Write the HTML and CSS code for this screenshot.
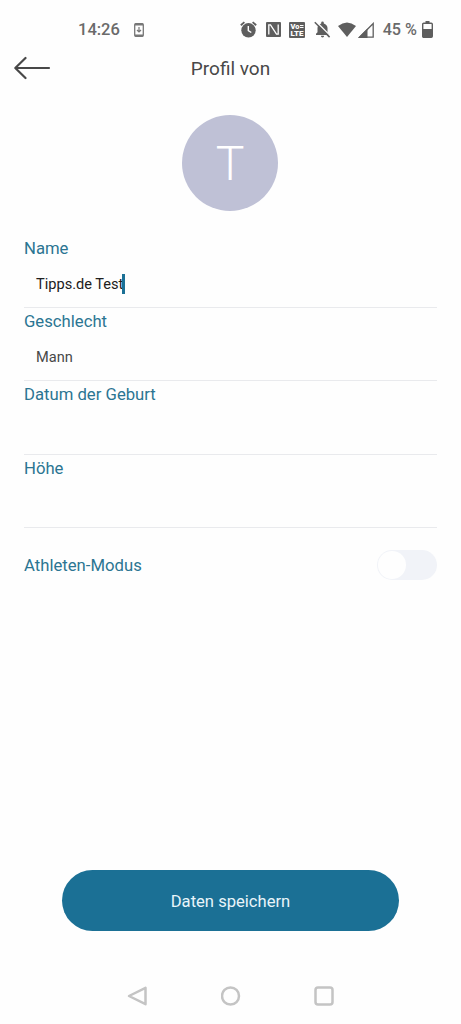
FILE: index.html
```html
<!DOCTYPE html>
<html lang="de">
<head>
<meta charset="utf-8">
<title>Profil von</title>
<link rel="stylesheet" href="styles.css">
</head>
<body>
<div class="screen">
  <div class="status">
    <div class="status-left">
      <span class="clock">14:26</span>
      <svg class="update" width="10" height="14" viewBox="0 0 10 14"><rect x=".7" y=".7" width="8.6" height="12.6" rx="1" fill="none" stroke="#777" stroke-width="1.3"/><path d="M1 1.500h8M1 12.500h8" stroke="#777" stroke-width="1.8"/><path d="M5 4v5M3 7l2 2 2-2" fill="none" stroke="#777" stroke-width="1.2"/></svg>
    </div>
    <div class="status-right">
      <svg width="17" height="17" viewBox="0 0 17 17"><circle cx="8.5" cy="9.3" r="7.2" fill="#5e5e5e"/><path d="M.8 4.2L4.4 1.1M16.2 4.2L12.6 1.1" stroke="#5e5e5e" stroke-width="1.8"/><path d="M8.3 5v4.7l3 1.8" fill="none" stroke="#fff" stroke-width="1.4"/></svg>
      <svg width="15" height="15" viewBox="0 0 15 15"><rect width="15" height="15" rx="1" fill="#5e5e5e"/><path d="M2.800 12.500V2.800h1.700l6 9.400h1.700V2.500" fill="none" stroke="#fff" stroke-width="1.300"/></svg>
      <svg width="16" height="16" viewBox="0 0 16 16"><rect width="16" height="16" rx="1" fill="#5e5e5e"/><text class="volte" x="1.5" y="7.2" textLength="9" lengthAdjust="spacingAndGlyphs">Vo</text><path d="M11 3.500h3.500M11 5.500h3.500" stroke="#fff"/><text class="volte" x="1.5" y="14.4" textLength="13" lengthAdjust="spacingAndGlyphs">LTE</text></svg>
      <svg width="17" height="17" viewBox="0 0 17 17"><path d="M2 14V12.800l1.500-1.500V7C3.500 4.600 5 3 7.200 2.400V1.800a1.300 1.300 0 0 1 2.600 0v.6C12 3 13.500 4.600 13.500 7v4.300l1.500 1.500V14zM6.900 14.800h3.200a1.600 1.600 0 0 1-3.200 0z" fill="#5e5e5e"/><path d="M2 .4l14.800 14.800" stroke="#fff" stroke-width="1.4"/><path d="M.8 1.300l14.800 14.800" stroke="#5e5e5e" stroke-width="1.500"/></svg>
      <svg class="wifi" width="18" height="15" viewBox="0 0 18 15"><path d="M0 4Q9-3.200 18 4L9 15z" fill="#5e5e5e"/></svg>
      <svg class="signal" width="16" height="16" viewBox="0 0 16 16"><path d="M1.500 15.200L15.200 1.500v13.700z" fill="none" stroke="#5e5e5e" stroke-width="1.300"/><path d="M0 16L9.500 6.500V16z" fill="#5e5e5e"/></svg>
      <span class="percent">45 %</span>
      <svg class="battery" width="11" height="17" viewBox="0 0 11 17"><path d="M3.500 0h4v2h-4z" fill="#5e5e5e"/><rect x=".7" y="2.200" width="9.600" height="14" rx="1" fill="none" stroke="#5e5e5e" stroke-width="1.400"/><path d="M1 8h9v8H1z" fill="#5e5e5e"/></svg>
    </div>
  </div>
  <header class="header">
    <svg class="back" width="37" height="24" viewBox="0 0 37 24"><path d="M11.500 2L1.300 12l10.200 10M1.300 12H35" fill="none" stroke="#484848" stroke-width="2.200" stroke-linecap="round" stroke-linejoin="round"/></svg>
    <h1 class="title">Profil von</h1>
  </header>
  <div class="avatar">T</div>
  <main class="form">
    <div class="field"><div class="label">Name</div><div class="value active">Tipps.de Test<span class="caret"></span></div></div>
    <div class="field"><div class="label">Geschlecht</div><div class="value">Mann</div></div>
    <div class="field"><div class="label">Datum der Geburt</div></div>
    <div class="field"><div class="label">Höhe</div></div>
    <div class="mode"><span class="label">Athleten-Modus</span><span class="toggle"><span class="knob"></span></span></div>
  </main>
  <button class="save">Daten speichern</button>
  <nav class="nav">
    <svg width="20" height="20" viewBox="0 0 20 20"><path d="M18.500 1.800v16.400L2 10z"/></svg>
    <svg width="20" height="20" viewBox="0 0 20 20"><circle cx="9.500" cy="10" r="8.500"/></svg>
    <svg width="20" height="20" viewBox="0 0 20 20"><rect x="1.500" y="1.500" width="17" height="17" rx="2.500"/></svg>
  </nav>
</div>
</body>
</html>
```
FILE: styles.css
```css
* { box-sizing: border-box; }
body { margin: 0; background: #fefefe; font-family: Roboto, sans-serif; }
.screen { width: 461px; height: 1024px; display: flex; flex-direction: column; overflow: hidden; }
.status { height: 44px; padding: 15px 28px 0 78px; display: flex; justify-content: space-between; color: #6a6a6a; }
.status-left, .status-right { height: 29px; display: flex; align-items: center; }
.status-left { gap: 14px; }
.status-right { gap: 8.500px; }
.clock, .percent { font-size: 16.500px; line-height: 29px; font-weight: 500; white-space: nowrap; }
.wifi { margin-left: -1.500px; }
.signal { margin-left: -6px; }
.percent { font-size: 16.200px; }
.battery { margin-left: -3.500px; }
.volte { font: 900 7.500px Roboto, sans-serif; fill: #fff; }
.header { height: 48px; padding: 0 14px; display: grid; grid-template-columns: 37px 1fr 37px; align-items: center; }
.title { margin: 0; font-size: 19px; font-weight: 400; text-align: center; color: #484848; }
.avatar { width: 96px; height: 96px; margin: 23px 0 0 182px; border-radius: 50%; background: #bfc1d6; color: #fff; font-size: 48px; font-weight: 300; line-height: 97px; text-align: center; }
.form { padding: 23.700px 24px 0; }
.field { height: 73.400px; border-bottom: 1px solid #e9eaed; }
.label { font-size: 16.700px; line-height: 27px; color: #2b7592; }
.value { height: 44px; padding-left: 12px; display: flex; align-items: center; font-size: 14.600px; color: #484848; }
.active { color: #202020; }
.caret { width: 3px; height: 20px; margin-left: -1px; background: #1b7095; }
.mode { height: 74px; display: flex; align-items: center; justify-content: space-between; }
.toggle { width: 60px; height: 30px; padding: 1px; border-radius: 15px; background: #f1f3f8; }
.knob { display: block; width: 28px; height: 28px; border-radius: 50%; background: #fefefe; }
.save { width: 337px; height: 61px; margin: auto auto 0; padding: 2px 0 0; border: 0; border-radius: 31px; background: #1b7095; color: #e9f5fa; font: 400 16.600px Roboto, sans-serif; }
.nav { height: 93px; padding: 55px 127px 0; display: flex; justify-content: space-between; }
.nav svg { fill: none; stroke: #c4c4c4; stroke-width: 2.500; stroke-linejoin: round; }
```
